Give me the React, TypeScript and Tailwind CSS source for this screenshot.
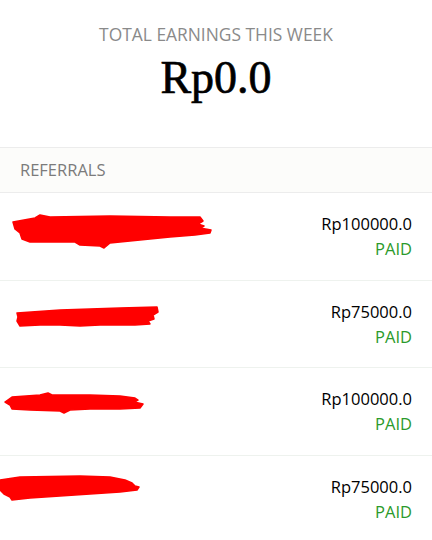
import React from "react";

const sans = { fontFamily: '"Open Sans", "Noto Sans", sans-serif' };

const scribbles = [
  "M13 29 L35 25 L40 22 L50 24 L110 23 L170 24 L200 24 L203 28 L198 31 L204 33 L200 35 L211 37 L210 40 L195 42 L170 44 L140 47 L110 50 L104 55 L100 53 L80 52 L75 49 L30 49 L22 46 L20 40 L15 36 Z",
  "M17 32 L60 29 L120 27 L157 26 L158 31 L153 34 L154 38 L148 40 L150 43 L135 44 L100 44 L80 45 L60 44 L40 44 L20 45 L17 40 L18 36 Z",
  "M5 34 L12 29 L40 27 L48 25 L52 27 L90 27 L120 28 L135 30 L138 32 L134 34 L143 36 L140 40 L120 41 L90 41 L70 42 L64 45 L60 43 L30 42 L12 41 L10 37 Z",
  "M0 24 L20 21 L80 20 L110 21 L125 24 L132 27 L135 30 L139 31 L137 34 L120 36 L90 38 L60 40 L30 42 L12 44 L10 41 L4 38 L0 34 Z",
];

const rows = ["Rp100000.0", "Rp75000.0", "Rp100000.0", "Rp75000.0"];

export default function App() {
  return (
    <div className="w-[432px] h-[540px] overflow-hidden bg-white" style={sans}>
      <div className="flex flex-col items-center pt-[23px] h-[148px] border-b border-[#ececec]">
        <div className="text-[17.4px] leading-[22px] text-[#8a8a8a]">
          TOTAL EARNINGS THIS WEEK
        </div>
        <div
          className="text-[46px] leading-[56px] mt-[5px] text-black [-webkit-text-stroke:0.7px_black]"
          style={{ fontFamily: '"Liberation Serif", serif' }}
        >
          Rp0.0
        </div>
      </div>
      <div className="h-[45px] flex items-center pl-[20px] bg-[#fcfcfa] border-b border-[#ececec]">
        <span className="text-[16.5px] text-[#7b7b7b]">REFERRALS</span>
      </div>
      {rows.map((amount, i) => (
        <div
          key={i}
          className="h-[87.5px] flex justify-between items-start border-b border-[#eef2ee] pr-[20px]"
        >
          <svg width="220" height="60" viewBox="0 0 220 60" className="block shrink-0">
            <path d={scribbles[i]} fill="#ff0000" stroke="#ff0000" strokeWidth="1.5" strokeLinejoin="round" />
          </svg>
          <div className="flex flex-col items-end mt-[19px]">
            <div className="text-[16.5px] leading-[24px] text-black">{amount}</div>
            <div className="text-[16.5px] leading-[24px] text-[#2b9a2b] mt-[1px]">PAID</div>
          </div>
        </div>
      ))}
    </div>
  );
}
